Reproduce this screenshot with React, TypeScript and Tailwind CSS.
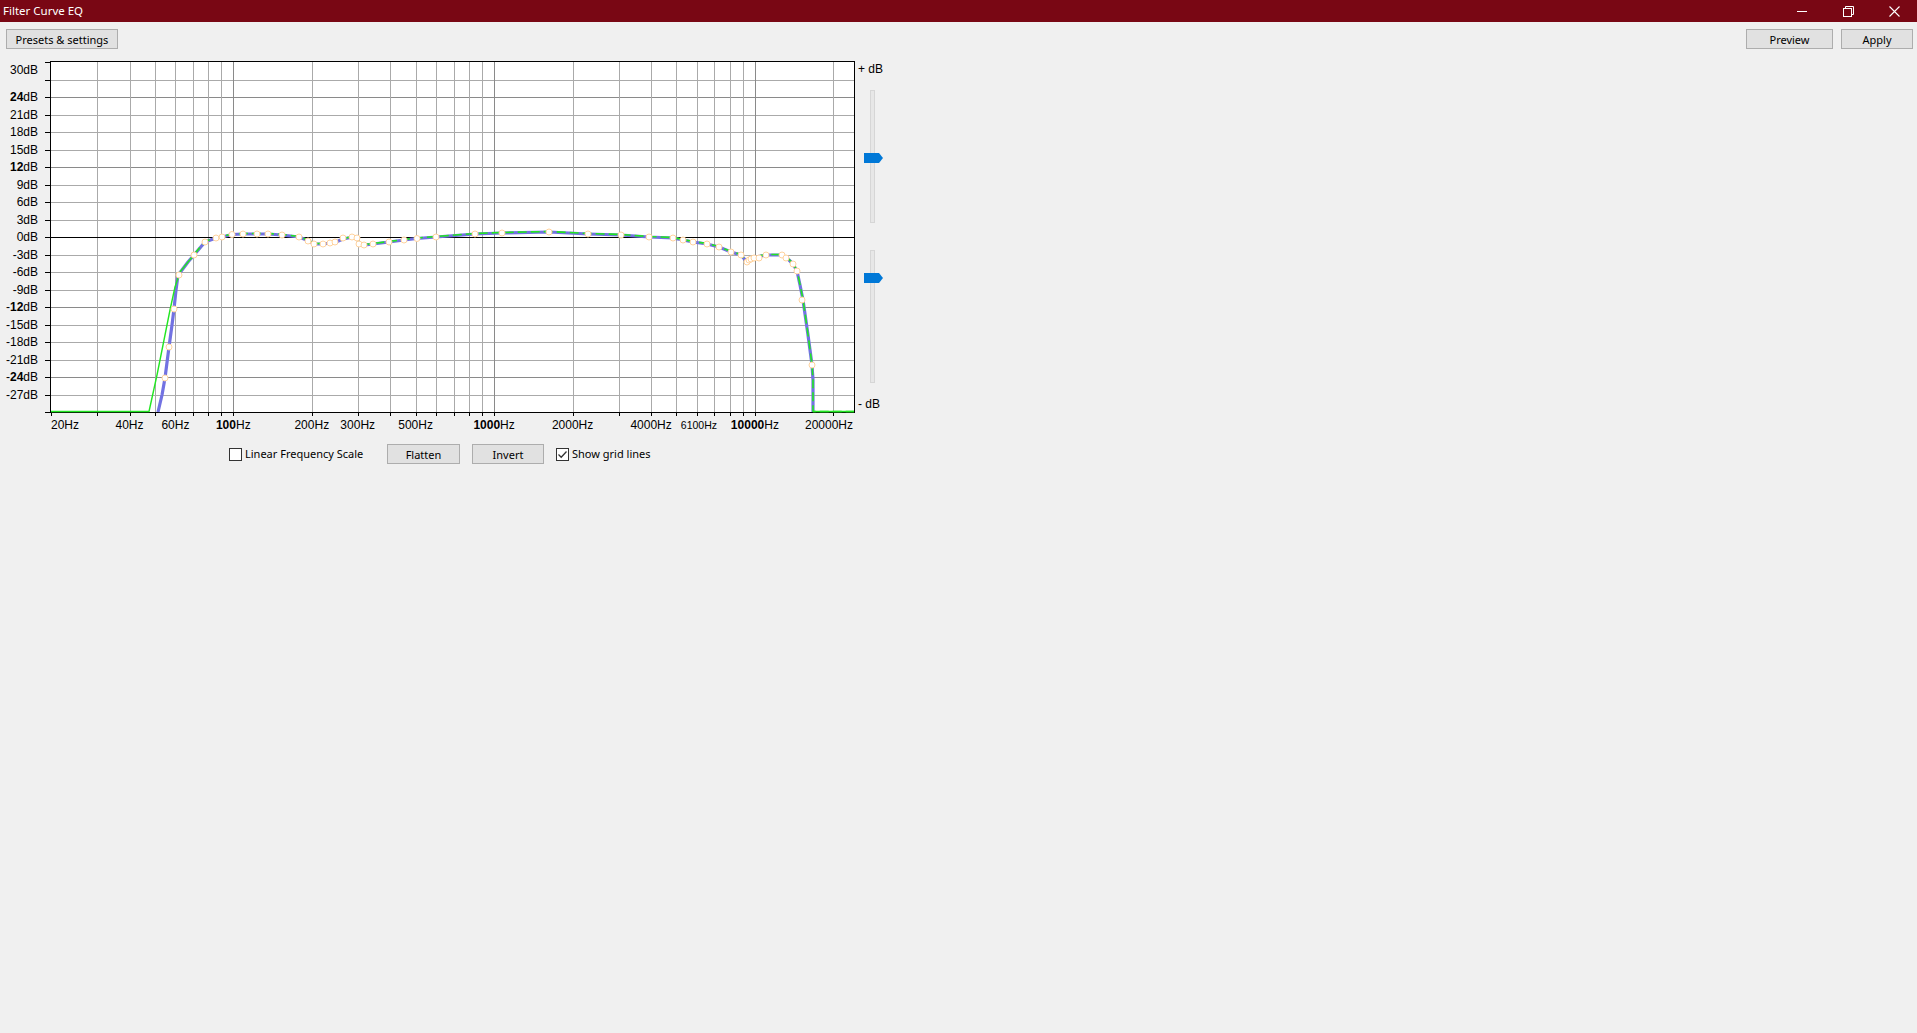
import React from "react";

const X0 = 51;
const PPD = 260.8;
const XR = 854;
const fx = (f: number) => X0 + PPD * Math.log10(f / 20);
const dy = (db: number) => 237 - db * (350 / 60);

const gridFreqs: number[] = [];
for (const dec of [10, 100, 1000, 10000]) {
  for (let m = 1; m <= 9; m++) {
    const f = dec * m;
    if (f > 20 && f <= 20000) gridFreqs.push(f);
  }
}
const majorF = [100, 1000, 10000];

const shared: [number, number][] = [
  [194, 255], [205, 242], [216, 238], [222, 237], [232, 234.5], [243, 234], [257, 234], [268, 234],
  [282, 235], [299, 237], [309, 241], [314, 244], [323, 244], [331, 243], [336, 242], [343, 239],
  [353, 237], [357, 238], [359, 243], [365, 245], [373, 244], [389, 242], [404, 240], [417, 238.5],
  [436, 237], [475, 234], [502, 233], [549, 232], [588, 234], [621, 235], [649, 237], [673, 238],
  [683, 240], [693, 242], [707, 244], [719, 247], [731, 252], [741, 255], [746, 261], [750, 259],
  [756, 257], [766, 255], [782, 255], [787, 258], [793, 264], [797, 271], [800, 285], [803, 300],
  [808, 335], [812, 365], [813, 380], [813, 412],
];
const blueStart: [number, number][] = [
  [158, 412], [162, 395], [165, 378], [169, 347], [172, 325], [174, 309], [176, 290], [178, 275],
  [182, 270], [188, 262],
];
const greenStart: [number, number][] = [
  [51, 411.5], [149, 411.5], [157, 375], [164, 340], [170, 310], [175, 287], [180, 272], [188, 262], [194, 255],
];
const bluePts = [...blueStart, ...shared];
const greenPts = [...shared, [854, 412] as [number, number]];
const toStr = (p: [number, number][], o = 0) => p.map(([x, y]) => `${x},${y + o}`).join(" ");

const circles: [number, number][] = [
  [165, 378], [169, 347], [174, 309], [179, 275], [194, 255], [205, 242], [216, 238], [222, 237],
  [232, 234.5], [243, 234], [257, 234], [268, 234], [282, 235], [299, 237], [308, 241], [314, 244],
  [323, 244], [330, 243], [335, 242], [343, 238], [352, 237], [357, 238], [359, 244], [364, 245],
  [373, 244], [389, 242], [404, 240], [417, 238.5], [436, 237], [475, 234], [502, 233], [549, 232],
  [588, 234], [621, 235], [649, 237], [673, 238], [683, 240], [693, 242], [707, 244], [719, 247],
  [731, 252], [741, 255], [747, 262], [749, 260], [751, 259], [754, 258], [759, 258], [766, 255],
  [782, 255], [786, 258], [793, 264], [797, 271], [802, 300], [812, 365],
];

const dbLevels: number[] = [];
for (let d = 27; d >= -27; d -= 3) dbLevels.push(d);

type DbLabel = { db: number; sign?: string; bold?: string; plain?: string; y?: number };
const dbLabels: DbLabel[] = [
  { db: 30, plain: "30", y: 70 },
  { db: 24, bold: "24" },
  { db: 21, plain: "21" },
  { db: 18, plain: "18" },
  { db: 15, plain: "15" },
  { db: 12, bold: "12" },
  { db: 9, plain: "9" },
  { db: 6, plain: "6" },
  { db: 3, plain: "3" },
  { db: 0, plain: "0" },
  { db: -3, plain: "-3" },
  { db: -6, plain: "-6" },
  { db: -9, plain: "-9" },
  { db: -12, sign: "-", bold: "12" },
  { db: -15, plain: "-15" },
  { db: -18, plain: "-18" },
  { db: -21, plain: "-21" },
  { db: -24, sign: "-", bold: "24" },
  { db: -27, plain: "-27" },
];

type HzLabel = { f: number; text: string; bold?: boolean; anchor: "start" | "middle" | "end"; small?: boolean };
const hzLabels: HzLabel[] = [
  { f: 20, text: "20", anchor: "start" },
  { f: 40, text: "40", anchor: "middle" },
  { f: 60, text: "60", anchor: "middle" },
  { f: 100, text: "100", bold: true, anchor: "middle" },
  { f: 200, text: "200", anchor: "middle" },
  { f: 300, text: "300", anchor: "middle" },
  { f: 500, text: "500", anchor: "middle" },
  { f: 1000, text: "1000", bold: true, anchor: "middle" },
  { f: 2000, text: "2000", anchor: "middle" },
  { f: 4000, text: "4000", anchor: "middle" },
  { f: 6100, text: "6100", anchor: "middle", small: true },
  { f: 10000, text: "10000", bold: true, anchor: "middle" },
  { f: 20000, text: "20000", anchor: "end" },
];

const ui = { fontFamily: '"Noto Sans", "Open Sans", Arial, sans-serif' };

function Btn({ children, w }: { children: React.ReactNode; w: string }) {
  return (
    <div
      className={`${w} h-[20px] flex items-center justify-center bg-[#e1e1e1] border border-[#adadad] text-[11px] text-black leading-none`}
      style={ui}
    >
      {children}
    </div>
  );
}

function CheckBox({ checked }: { checked?: boolean }) {
  return (
    <div className="w-[13px] h-[13px] border border-[#333333] bg-white flex items-center justify-center">
      {checked && (
        <svg width="11" height="11" viewBox="0 0 11 11">
          <path d="M1.5 5.5 L4.2 8.2 L9.5 2.5" fill="none" stroke="#333" strokeWidth="1.3" />
        </svg>
      )}
    </div>
  );
}

function Thumb({ top }: { top: string }) {
  return (
    <svg className={`absolute left-[-7px] ${top}`} width="19" height="10" viewBox="0 0 19 10">
      <polygon points="0,0 15,0 19,5 15,10 0,10" fill="#0078d7" />
    </svg>
  );
}

export default function App() {
  return (
    <div className="w-[1917px] h-[1033px] bg-[#f0f0f0] flex flex-col overflow-hidden">
      <div className="h-[22px] bg-[#790714] flex items-center justify-between shrink-0">
        <div className="pl-[3px] text-white text-[11.5px] leading-none" style={ui}>
          Filter Curve EQ
        </div>
        <div className="flex items-center h-full">
          <div className="w-[46px] h-full flex items-center justify-center">
            <svg width="10" height="10" viewBox="0 0 10 10">
              <line x1="0" y1="5.5" x2="10" y2="5.5" stroke="white" strokeWidth="1" />
            </svg>
          </div>
          <div className="w-[46px] h-full flex items-center justify-center">
            <svg width="11" height="11" viewBox="0 0 11 11">
              <rect x="0.5" y="2.5" width="8" height="8" fill="none" stroke="white" strokeWidth="1" />
              <path d="M2.5 2.5 V0.5 H10.5 V8.5 H8.5" fill="none" stroke="white" strokeWidth="1" />
            </svg>
          </div>
          <div className="w-[46px] h-full flex items-center justify-center">
            <svg width="11" height="11" viewBox="0 0 11 11">
              <path d="M0.5 0.5 L10.5 10.5 M10.5 0.5 L0.5 10.5" stroke="white" strokeWidth="1.1" />
            </svg>
          </div>
        </div>
      </div>

      <div className="flex items-center justify-between pt-[7px] pl-[6px] pr-[4px]">
        <Btn w="w-[112px]">Presets &amp; settings</Btn>
        <div className="flex gap-[8px]">
          <Btn w="w-[87px]">Preview</Btn>
          <Btn w="w-[72px]">Apply</Btn>
        </div>
      </div>

      <div className="flex">
        <svg width="856" height="391" viewBox="0 49 856 391" className="shrink-0">
          <rect x={X0 - 1} y={62} width={XR - X0 + 1} height={350} fill="white" />
          {dbLevels.map((d) => {
            const y = Math.round(dy(d)) + 0.5;
            const major = d === 24 || d === 12 || d === -12 || d === -24;
            if (d === 0) return null;
            return (
              <line key={"h" + d} x1={X0} x2={XR} y1={y} y2={y} stroke={major ? "#8a8a8a" : "#aaaaaa"} strokeWidth="1" />
            );
          })}
          {gridFreqs.map((f) => {
            const x = Math.round(fx(f)) + 0.5;
            const major = majorF.includes(f);
            return (
              <line key={"v" + f} x1={x} x2={x} y1={62} y2={412} stroke={major ? "#8a8a8a" : "#aaaaaa"} strokeWidth="1" />
            );
          })}
          <line x1={X0} x2={XR} y1={237.5} y2={237.5} stroke="#000" strokeWidth="1" />
          <line x1={50.5} x2={50.5} y1={61} y2={413} stroke="#000" strokeWidth="1" />
          <line x1={50} x2={XR + 1} y1={61.5} y2={61.5} stroke="#000" strokeWidth="1" />
          <line x1={XR + 0.5} x2={XR + 0.5} y1={61} y2={413} stroke="#000" strokeWidth="1" />
          {[30, ...dbLevels].map((d) => {
            const y = Math.round(dy(d)) + 0.5;
            return <line key={"lt" + d} x1={45} x2={50} y1={y} y2={y} stroke="#000" strokeWidth="1" />;
          })}
          {[20, ...gridFreqs].map((f) => {
            const x = Math.round(fx(f)) + 0.5;
            return <line key={"bt" + f} x1={x} x2={x} y1={413} y2={416} stroke="#000" strokeWidth="1" />;
          })}
          <line x1={45} x2={XR + 1} y1={412.5} y2={412.5} stroke="#000" strokeWidth="1" />
          <polyline points={toStr(bluePts)} fill="none" stroke="#7272e2" strokeWidth="3.2" strokeLinejoin="round" />
          <polyline points={toStr(greenStart)} fill="none" stroke="#22e622" strokeWidth="1.4" strokeLinejoin="round" />
          <polyline points={toStr(greenPts, -0.5)} fill="none" stroke="#22e622" strokeWidth="1.6" strokeLinejoin="round" strokeDasharray="9 4" />
          <line x1={813} x2={854} y1={411.5} y2={411.5} stroke="#22e622" strokeWidth="1.5" />
          {circles.map(([x, y], i) => (
            <circle key={"c" + i} cx={x} cy={y} r={3} fill="white" stroke="#ffd39e" strokeWidth="1" />
          ))}
          {dbLabels.map((l) => (
            <text
              key={"dl" + l.db}
              x={38}
              y={l.y ?? dy(l.db)}
              textAnchor="end"
              dominantBaseline="central"
              fontFamily='"Liberation Sans", Arial, sans-serif'
              fontSize="12"
              fill="#000"
            >
              {l.sign}
              {l.bold && <tspan fontWeight="bold">{l.bold}</tspan>}
              {l.plain}
              dB
            </text>
          ))}
          {hzLabels.map((l) => (
            <text
              key={"hl" + l.f}
              x={l.anchor === "start" ? 51 : l.anchor === "end" ? 853 : fx(l.f)}
              y={425}
              textAnchor={l.anchor}
              dominantBaseline="central"
              fontFamily='"Liberation Sans", Arial, sans-serif'
              fontSize={l.small ? "10.5" : "12"}
              fill="#000"
            >
              {l.bold ? <tspan fontWeight="bold">{l.text}</tspan> : l.text}
              Hz
            </text>
          ))}
        </svg>

        <div className="flex flex-col pl-[2px] w-[50px]">
          <div className="mt-[14px] h-[12px] leading-[12px] text-[12px] text-black" style={{ fontFamily: '"Liberation Sans", Arial, sans-serif' }}>
            + dB
          </div>
          <div className="relative mt-[15px] ml-[12px] w-[5px] h-[133px] bg-[#e7e7e7] border border-[#d6d6d6]">
            <Thumb top="top-[62px]" />
          </div>
          <div className="relative mt-[27px] ml-[12px] w-[5px] h-[133px] bg-[#e7e7e7] border border-[#d6d6d6]">
            <Thumb top="top-[22px]" />
          </div>
          <div className="mt-[15px] h-[12px] leading-[12px] text-[12px] text-black" style={{ fontFamily: '"Liberation Sans", Arial, sans-serif' }}>
            - dB
          </div>
        </div>
      </div>

      <div className="flex items-center mt-[4px] pl-[229px] text-[11px] text-black" style={ui}>
        <CheckBox />
        <span className="ml-[3px] w-[142px]">Linear Frequency Scale</span>
        <Btn w="w-[73px]">Flatten</Btn>
        <div className="w-[12px]" />
        <Btn w="w-[72px]">Invert</Btn>
        <div className="w-[12px]" />
        <CheckBox checked />
        <span className="ml-[3px]">Show grid lines</span>
      </div>
    </div>
  );
}
